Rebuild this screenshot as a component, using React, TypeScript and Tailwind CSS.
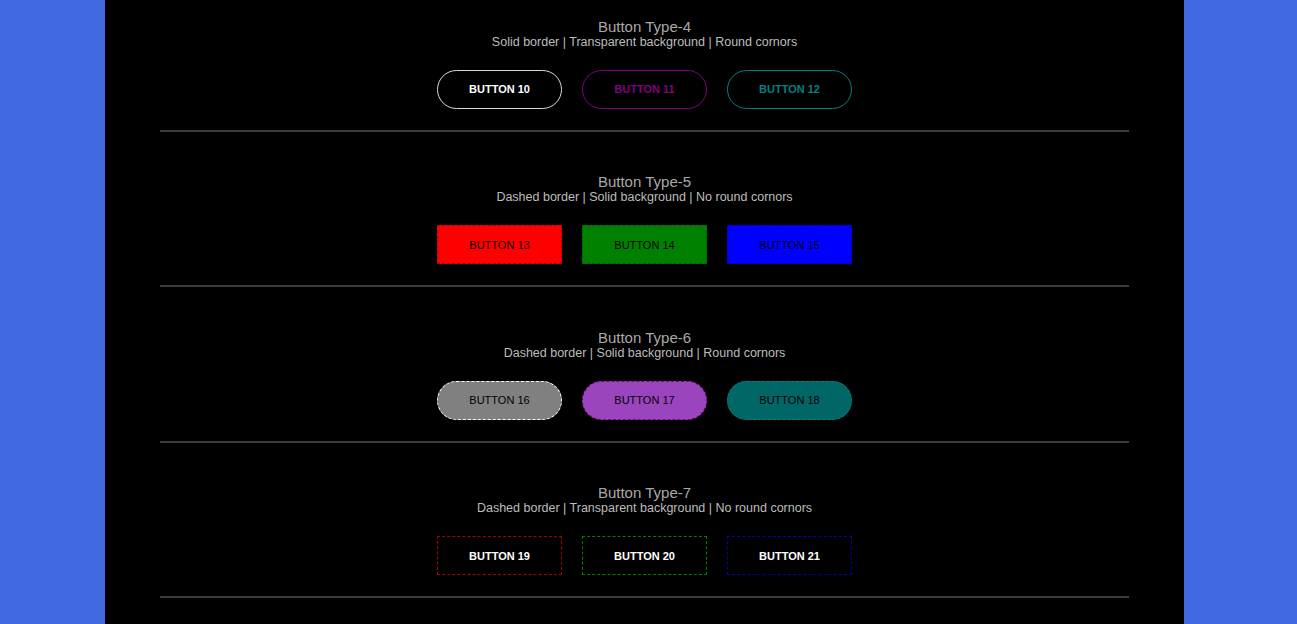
import React from "react";

type Btn = { label: string; cls: string };
type Section = { title: string; sub: string; buttons: Btn[] };

const base =
  "w-[125px] h-[39px] flex items-center justify-center pt-[1px] text-[11px] uppercase shrink-0";

const sections: Section[] = [
  {
    title: "Button Type-4",
    sub: "Solid border | Transparent background | Round cornors",
    buttons: [
      { label: "BUTTON 10", cls: "border border-[#d9d9d9] rounded-[20px] text-white font-bold bg-transparent" },
      { label: "BUTTON 11", cls: "border border-[#800080] rounded-[20px] text-[#800080] font-bold bg-transparent" },
      { label: "BUTTON 12", cls: "border border-[#008080] rounded-[20px] text-[#008080] font-bold bg-transparent" },
    ],
  },
  {
    title: "Button Type-5",
    sub: "Dashed border | Solid background | No round cornors",
    buttons: [
      { label: "BUTTON 13", cls: "border border-dashed border-[#b30000] bg-[#ff0000] text-black" },
      { label: "BUTTON 14", cls: "border border-dashed border-[#006400] bg-[#008000] text-black" },
      { label: "BUTTON 15", cls: "border border-dashed border-[#0000b3] bg-[#0000ff] text-black" },
    ],
  },
  {
    title: "Button Type-6",
    sub: "Dashed border | Solid background | Round cornors",
    buttons: [
      { label: "BUTTON 16", cls: "border border-dashed border-[#ffffff] rounded-[20px] bg-[#808080] text-black" },
      { label: "BUTTON 17", cls: "border border-dashed border-[#800080] rounded-[20px] bg-[#9a45be] text-black" },
      { label: "BUTTON 18", cls: "border border-dashed border-[#008080] rounded-[20px] bg-[#006666] text-black" },
    ],
  },
  {
    title: "Button Type-7",
    sub: "Dashed border | Transparent background | No round cornors",
    buttons: [
      { label: "BUTTON 19", cls: "border border-dashed border-[#a80000] text-white font-bold bg-transparent" },
      { label: "BUTTON 20", cls: "border border-dashed border-[#008000] text-white font-bold bg-transparent" },
      { label: "BUTTON 21", cls: "border border-dashed border-[#0000b0] text-white font-bold bg-transparent" },
    ],
  },
];

export default function App() {
  return (
    <div
      className="min-h-[624px] w-full bg-[#4169e1] overflow-hidden"
      style={{ fontFamily: '"Liberation Sans", Arial, sans-serif' }}
    >
      <div className="ml-[105px] w-[1079px] min-h-[624px] bg-black px-[55px] pt-[17.5px]">
        {sections.map((s, i) => (
          <div key={i} className={i === 0 ? "" : "pt-[41.5px]"}>
            <div className="text-center text-[15px] leading-[17px] text-[#a9a9a9]">{s.title}</div>
            <div className="text-center text-[12.5px] leading-[14px] text-[#bdbdbd]">{s.sub}</div>
            <div className="mt-[21px] flex justify-center gap-[20px]">
              {s.buttons.map((b) => (
                <div key={b.label} className={`${base} ${b.cls}`}>
                  {b.label}
                </div>
              ))}
            </div>
            <div className="mt-[21px] h-[2px] bg-[#3c3c3c]" />
          </div>
        ))}
      </div>
    </div>
  );
}
